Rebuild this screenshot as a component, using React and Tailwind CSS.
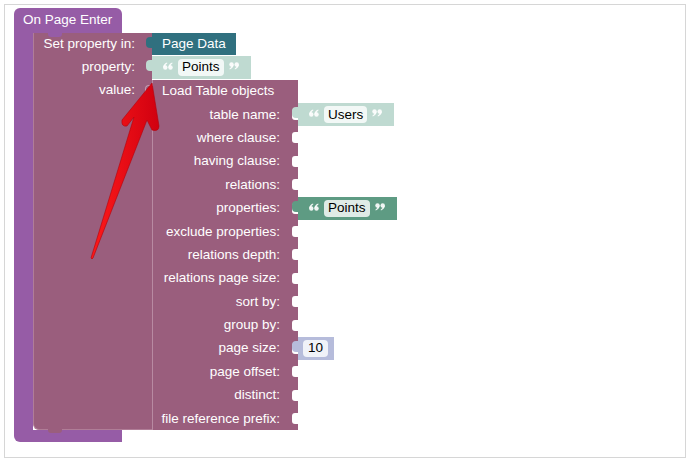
import React from 'react'
import clsx from 'clsx'

const EVENT = 'bg-[#965ca6]'
const MAUVE = 'bg-[#9a5e7d]'

// rows of the "Load Table objects" block
const ROWS = [
    { label: 'table name:', block: { kind: 'text', value: 'Users', bg: 'bg-[#bfdad1]' } },
    { label: 'where clause:' },
    { label: 'having clause:' },
    { label: 'relations:' },
    { label: 'properties:', block: { kind: 'text', value: 'Points', bg: 'bg-[#5e9b83]' } },
    { label: 'exclude properties:' },
    { label: 'relations depth:' },
    { label: 'relations page size:' },
    { label: 'sort by:' },
    { label: 'group by:' },
    { label: 'page size:', block: { kind: 'num', value: '10' } },
    { label: 'page offset:' },
    { label: 'distinct:' },
    { label: 'file reference prefix:' },
]

// blockly style "66" / "99" quote marks
function Quote({ close }) {
    const six = (
        <>
            <circle cx="2.3" cy="5.5" r="2.2" />
            <path d="M0.15,5.4 Q0.3,1.9 4,0.5 L4.4,1.3 Q2.4,2.6 2.2,4.2 Z" />
        </>
    )
    return (
        <svg width="10" height="8" viewBox="0 0 10 8" className={clsx('fill-white/90 mb-[3px]', close && 'rotate-180')}>
            {six}
            <g transform="translate(5.2 0)">{six}</g>
        </svg>
    )
}

function Tab({ bg }) {
    // puzzle tab that plugs into the parent's input slot
    return <span className={clsx('absolute left-[-6px] top-[4px] w-[7px] h-[11px] rounded-l-[4px]', bg)} />
}

function TextBlock({ value, bg }) {
    return (
        <div className={clsx('relative flex items-center h-[23px] pl-[11px] pr-[12px]', bg)}>
            <Tab bg={bg} />
            <Quote />
            <span className="ml-[5px] mr-[5px] px-[4px] h-[17px] rounded-[4px] bg-white/80 text-black flex items-center">
                {value}
            </span>
            <Quote close />
        </div>
    )
}

function NumBlock({ value }) {
    return (
        <div className="relative flex items-center h-[23px] pl-[5px] pr-[6px] bg-[#b6bcdb]">
            <Tab bg="bg-[#b6bcdb]" />
            <span className="px-[5px] h-[17px] rounded-[4px] bg-white/80 text-black flex items-center">{value}</span>
        </div>
    )
}

function LoadTable() {
    return (
        <div className="relative mt-[1px] flex flex-col">
            {/* tab into "value:" */}
            <span className={clsx('absolute left-[-7px] top-[5px] w-[8px] h-[11px] rounded-l-[4px] border border-r-0 border-[#c49ab0]', MAUVE)} />
            <div className={clsx('w-[146px] h-[23px] flex items-center pl-[9px] border-l border-[#b88aa2]', MAUVE)}>
                Load Table objects
            </div>
            {ROWS.map(row => (
                <div key={row.label} className="flex h-[23.4px]">
                    <div className={clsx('relative w-[146px] flex items-center justify-end pr-[18px] border-l border-[#b88aa2]', MAUVE)}>
                        {row.label}
                        <span className="absolute right-0 top-[6px] w-[6px] h-[11px] rounded-l-[3px] bg-white" />
                    </div>
                    {row.block && (
                        <div className="flex items-center">
                            {row.block.kind === 'num'
                                ? <NumBlock value={row.block.value} />
                                : <TextBlock value={row.block.value} bg={row.block.bg} />}
                        </div>
                    )}
                </div>
            ))}
        </div>
    )
}

function SetProperty() {
    return (
        <div className="relative flex">
            {/* labels */}
            <div className={clsx('relative w-[119px] rounded-bl-[6px] border-l border-b border-[#b07d97] flex flex-col items-end pr-[17px]', MAUVE)}>
                <span className={clsx('absolute left-[14px] top-0 w-[14px] h-[4px] rounded-b-[3px]', EVENT)} />
                <span className={clsx('absolute left-[14px] bottom-[-4px] w-[14px] h-[4px] rounded-b-[3px]', MAUVE)} />
                <div className="h-[23px] flex items-center">Set property in:</div>
                <div className="h-[23px] flex items-center">property:</div>
                <div className="h-[23px] flex items-center">value:</div>
            </div>
            {/* inputs */}
            <div className="flex flex-col">
                <div className="h-[23px] flex">
                    <div className="relative h-[22px] w-[84px] bg-[#30707f] flex items-center pl-[10px]">
                        <Tab bg="bg-[#30707f]" />
                        Page Data
                    </div>
                </div>
                <div className="h-[23px] flex">
                    <TextBlock value="Points" bg="bg-[#bfdad1]" />
                </div>
                <LoadTable />
            </div>
        </div>
    )
}

function Arrow() {
    return (
        <svg className="absolute left-0 top-0 pointer-events-none" width="690" height="462" viewBox="0 0 690 462">
            <defs>
                <linearGradient id="red" x1="0" y1="0" x2="1" y2="0">
                    <stop offset="0" stopColor="#ff1a1a" />
                    <stop offset="1" stopColor="#d00010" />
                </linearGradient>
            </defs>
            <path
                d="M152,83 L159,126 Q159,132 152,130 L147,120 L93,258 Q92,260 91,258 L134,117 L127,126 Q121,127 122,120 Z"
                fill="url(#red)"
                stroke="#b3000a"
                strokeWidth="0.6"
                strokeLinejoin="round"
            />
        </svg>
    )
}

export default function App() {
    return (
        <div className="relative w-[690px] h-[462px] bg-white pt-[4px] pl-[4px] font-['Liberation_Sans',Arial,sans-serif] text-[13.5px] text-white">
            <div className="w-[682px] h-[454px] border border-[#d6d6d6] pl-[9px] pt-[3px]">
                {/* On Page Enter event block */}
                <div className="flex flex-col w-fit">
                    <div className={clsx('h-[25px] w-[108px] rounded-t-[6px] pl-[9px] flex items-center', EVENT)}>
                        On Page Enter
                    </div>
                    <div className="flex">
                        <div className={clsx('w-[19px]', EVENT)} />
                        <SetProperty />
                    </div>
                    <div className={clsx('h-[12px] w-[108px] rounded-bl-[6px]', EVENT)} />
                </div>
            </div>
            <Arrow />
        </div>
    )
}
